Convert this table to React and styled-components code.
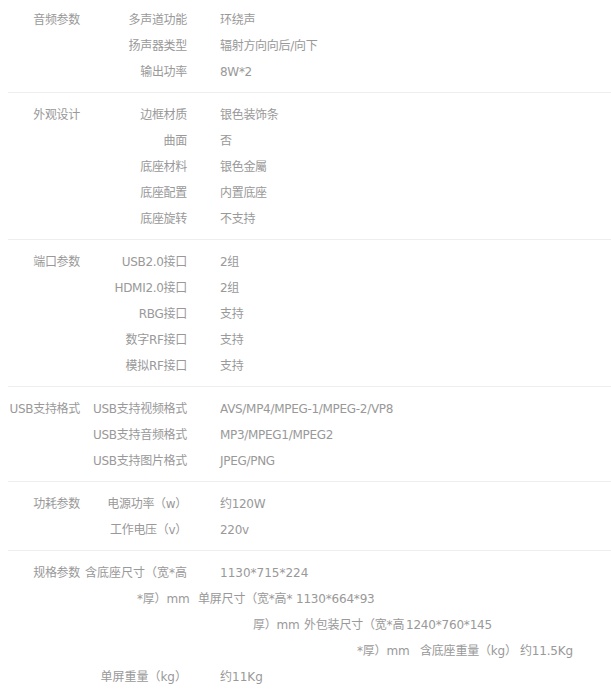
import styled, { createGlobalStyle } from 'styled-components';

const GlobalStyle = createGlobalStyle`
  body {
    margin: 0;
    background: #ffffff;
    font-family: "DejaVu Sans", "Noto Sans CJK SC", sans-serif;
    font-size: 12px;
    color: #999999;
  }
`;

const SpecWrapper = styled.div`
  padding-left: 8px;
`;

const Section = styled.section`
  display: flex;
  padding: 8px 0;
  border-bottom: 1px solid #eeeeee;

  &:first-child {
    padding-top: 6px;
  }

  &:last-child {
    border-bottom: none;
  }
`;

const GroupTitle = styled.div`
  width: 72px;
  flex-shrink: 0;
  text-align: right;
  line-height: 28px;
  white-space: nowrap;
  letter-spacing: -0.3px;
`;

const RowList = styled.div`
  display: flex;
  flex-direction: column;
  flex: 1;
`;

const Row = styled.div`
  display: flex;
  line-height: 28px;
  height: 26px;
  letter-spacing: ${(p) => (p.$tight ? '-0.3px' : '0')};
`;

const Label = styled.div`
  width: 107px;
  flex-shrink: 0;
  text-align: right;
  white-space: nowrap;
`;

const Value = styled.div`
  margin-left: 33px;
  white-space: nowrap;
`;

// broken float flow of the last group, kept as it shows
const SpillRow = styled.div`
  display: flex;
  line-height: 28px;
  height: 26px;
  padding-left: ${(p) => p.$indent}px;
  letter-spacing: -0.2px;
`;

const SpillCell = styled.span`
  flex-shrink: 0;
  white-space: nowrap;
  width: ${(p) => (p.$w ? `${p.$w}px` : 'auto')};
`;

const specs = [
  {
    title: '音频参数',
    rows: [
      ['多声道功能', '环绕声'],
      ['扬声器类型', '辐射方向向后/向下'],
      ['输出功率', '8W*2'],
    ],
  },
  {
    title: '外观设计',
    rows: [
      ['边框材质', '银色装饰条'],
      ['曲面', '否'],
      ['底座材料', '银色金屬'],
      ['底座配置', '内置底座'],
      ['底座旋转', '不支持'],
    ],
  },
  {
    title: '端口参数',
    rows: [
      ['USB2.0接口', '2组'],
      ['HDMI2.0接口', '2组'],
      ['RBG接口', '支持'],
      ['数字RF接口', '支持'],
      ['模拟RF接口', '支持'],
    ],
  },
  {
    title: 'USB支持格式',
    rows: [
      ['USB支持视频格式', 'AVS/MP4/MPEG-1/MPEG-2/VP8'],
      ['USB支持音频格式', 'MP3/MPEG1/MPEG2'],
      ['USB支持图片格式', 'JPEG/PNG'],
    ],
  },
  {
    title: '功耗参数',
    rows: [
      ['电源功率（w）', '约120W'],
      ['工作电压（v）', '220v'],
    ],
  },
];

const spill = [
  { indent: 57, cells: [['*厚）mm', 61], ['单屏尺寸（宽*高*', 98], ['1130*664*93']] },
  { indent: 173, cells: [['厚）mm', 51], ['外包装尺寸（宽*高', 102], ['1240*760*145']] },
  { indent: 277, cells: [['*厚）mm', 63], ['含底座重量（kg）', 100], ['约11.5Kg']] },
];

export default function App() {
  return (
    <SpecWrapper>
      <GlobalStyle />
      {specs.map((group) => (
        <Section key={group.title}>
          <GroupTitle>{group.title}</GroupTitle>
          <RowList>
            {group.rows.map(([label, value]) => (
              <Row key={label} $tight>
                <Label>{label}</Label>
                <Value>{value}</Value>
              </Row>
            ))}
          </RowList>
        </Section>
      ))}
      <Section>
        <GroupTitle>规格参数</GroupTitle>
        <RowList>
          <Row>
            <Label>含底座尺寸（宽*高</Label>
            <Value>1130*715*224</Value>
          </Row>
          {spill.map((line, i) => (
            <SpillRow key={i} $indent={line.indent}>
              {line.cells.map(([text, w]) => (
                <SpillCell key={text} $w={w}>
                  {text}
                </SpillCell>
              ))}
            </SpillRow>
          ))}
          <Row>
            <Label>单屏重量（kg）</Label>
            <Value>约11Kg</Value>
          </Row>
        </RowList>
      </Section>
    </SpecWrapper>
  );
}
